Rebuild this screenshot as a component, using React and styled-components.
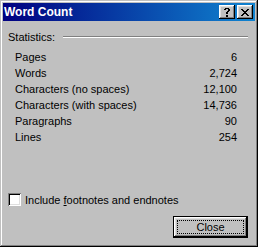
import React from 'react';
import styled, { createGlobalStyle } from 'styled-components';

const GlobalStyle = createGlobalStyle`
  html, body {
    margin: 0;
    padding: 0;
    background: #c0c0c0;
  }
  body {
    font-family: "Liberation Sans", Arial, sans-serif;
    font-size: 11px;
    color: #000;
  }
`;

const stats = [
  { label: 'Pages', value: '6' },
  { label: 'Words', value: '2,724' },
  { label: 'Characters (no spaces)', value: '12,100' },
  { label: 'Characters (with spaces)', value: '14,736' },
  { label: 'Paragraphs', value: '90' },
  { label: 'Lines', value: '254' },
];

const helpPixels = [
  '.####.',
  '##..##',
  '....##',
  '...##.',
  '..##..',
  '..##..',
  '......',
  '..##..',
  '..##..',
];

const closePixels = [
  '##....##',
  '.##..##.',
  '..####..',
  '...##...',
  '..####..',
  '.##..##.',
  '##....##',
];

const PixelIcon = ({ rows }) => (
  <svg
    width={rows[0].length}
    height={rows.length}
    viewBox={`0 0 ${rows[0].length} ${rows.length}`}
    shapeRendering='crispEdges'
  >
    {rows.map((row, y) =>
      row.split('').map((c, x) =>
        c === '#' ? <rect key={`${x}-${y}`} x={x} y={y} width='1' height='1' fill='#000' /> : null
      )
    )}
  </svg>
);

const App = () => {
  return (
    <>
      <GlobalStyle />
      <Window>
        <TitleBar>
          <Title>Word Count</Title>
          <CaptionButtons>
            <CaptionButton><PixelIcon rows={helpPixels} /></CaptionButton>
            <CaptionButton><PixelIcon rows={closePixels} /></CaptionButton>
          </CaptionButtons>
        </TitleBar>
        <Body>
          <GroupHeader>
            <span>Statistics:</span>
            <GroupLine />
          </GroupHeader>
          <StatList>
            {stats.map((s) => (
              <StatRow key={s.label}>
                <span>{s.label}</span>
                <span>{s.value}</span>
              </StatRow>
            ))}
          </StatList>
          <Footer>
            <CheckRow>
              <CheckBox />
              <span>Include <u>f</u>ootnotes and endnotes</span>
            </CheckRow>
            <ButtonRow>
              <DefaultButton>Close</DefaultButton>
            </ButtonRow>
          </Footer>
        </Body>
      </Window>
    </>
  );
};

const Window = styled.div`
  width: 258px;
  height: 247px;
  box-sizing: border-box;
  padding: 3px;
  display: flex;
  flex-direction: column;
  background: #c0c0c0;
  box-shadow:
    inset -1px -1px #000,
    inset 1px 1px #c0c0c0,
    inset -2px -2px #808080,
    inset 2px 2px #fff;
`;

const TitleBar = styled.div`
  height: 18px;
  display: flex;
  align-items: center;
  justify-content: space-between;
  padding: 0 2px 0 1px;
  background: linear-gradient(90deg, #000080, #1084d0);
`;

const Title = styled.span`
  color: #fff;
  font-weight: bold;
  font-size: 12px;
  line-height: 14px;
`;

const CaptionButtons = styled.div`
  display: flex;
  gap: 2px;
`;

const CaptionButton = styled.div`
  width: 16px;
  height: 14px;
  box-sizing: border-box;
  display: flex;
  align-items: center;
  justify-content: center;
  background: #c0c0c0;
  box-shadow:
    inset -1px -1px #000,
    inset 1px 1px #fff,
    inset -2px -2px #808080,
    inset 2px 2px #dfdfdf;
`;

const Body = styled.div`
  flex: 1;
  display: flex;
  flex-direction: column;
  padding: 10px 7px 6px 5px;
`;

const GroupHeader = styled.div`
  height: 13px;
  display: flex;
  align-items: center;
  line-height: 13px;
`;

const GroupLine = styled.div`
  flex: 1;
  margin: 0 0 1px 8px;
  border-top: 1px solid #808080;
  border-bottom: 1px solid #fff;
`;

const StatList = styled.div`
  margin: 5px 11px 0 7px;
  display: flex;
  flex-direction: column;
`;

const StatRow = styled.div`
  height: 16px;
  display: flex;
  align-items: center;
  justify-content: space-between;
`;

const Footer = styled.div`
  margin-top: auto;
  display: flex;
  flex-direction: column;
`;

const CheckRow = styled.div`
  display: flex;
  align-items: center;
  gap: 4px;
  height: 13px;
`;

const CheckBox = styled.div`
  width: 13px;
  height: 13px;
  box-sizing: border-box;
  background: #fff;
  box-shadow:
    inset 1px 1px #808080,
    inset -1px -1px #fff,
    inset 2px 2px #000,
    inset -2px -2px #dfdfdf;
`;

const ButtonRow = styled.div`
  display: flex;
  justify-content: flex-end;
  margin-top: 10px;
`;

const DefaultButton = styled.button`
  position: relative;
  width: 75px;
  height: 22px;
  box-sizing: border-box;
  border: 1px solid #000;
  background: #c0c0c0;
  font-family: "Liberation Sans", Arial, sans-serif;
  font-size: 11px;
  color: #000;
  padding: 0;
  box-shadow:
    inset -1px -1px #000,
    inset 1px 1px #fff,
    inset -2px -2px #808080,
    inset 2px 2px #dfdfdf;

  &::after {
    content: '';
    position: absolute;
    inset: 3px;
    border: 1px dotted #000;
  }
`;

export default App;
